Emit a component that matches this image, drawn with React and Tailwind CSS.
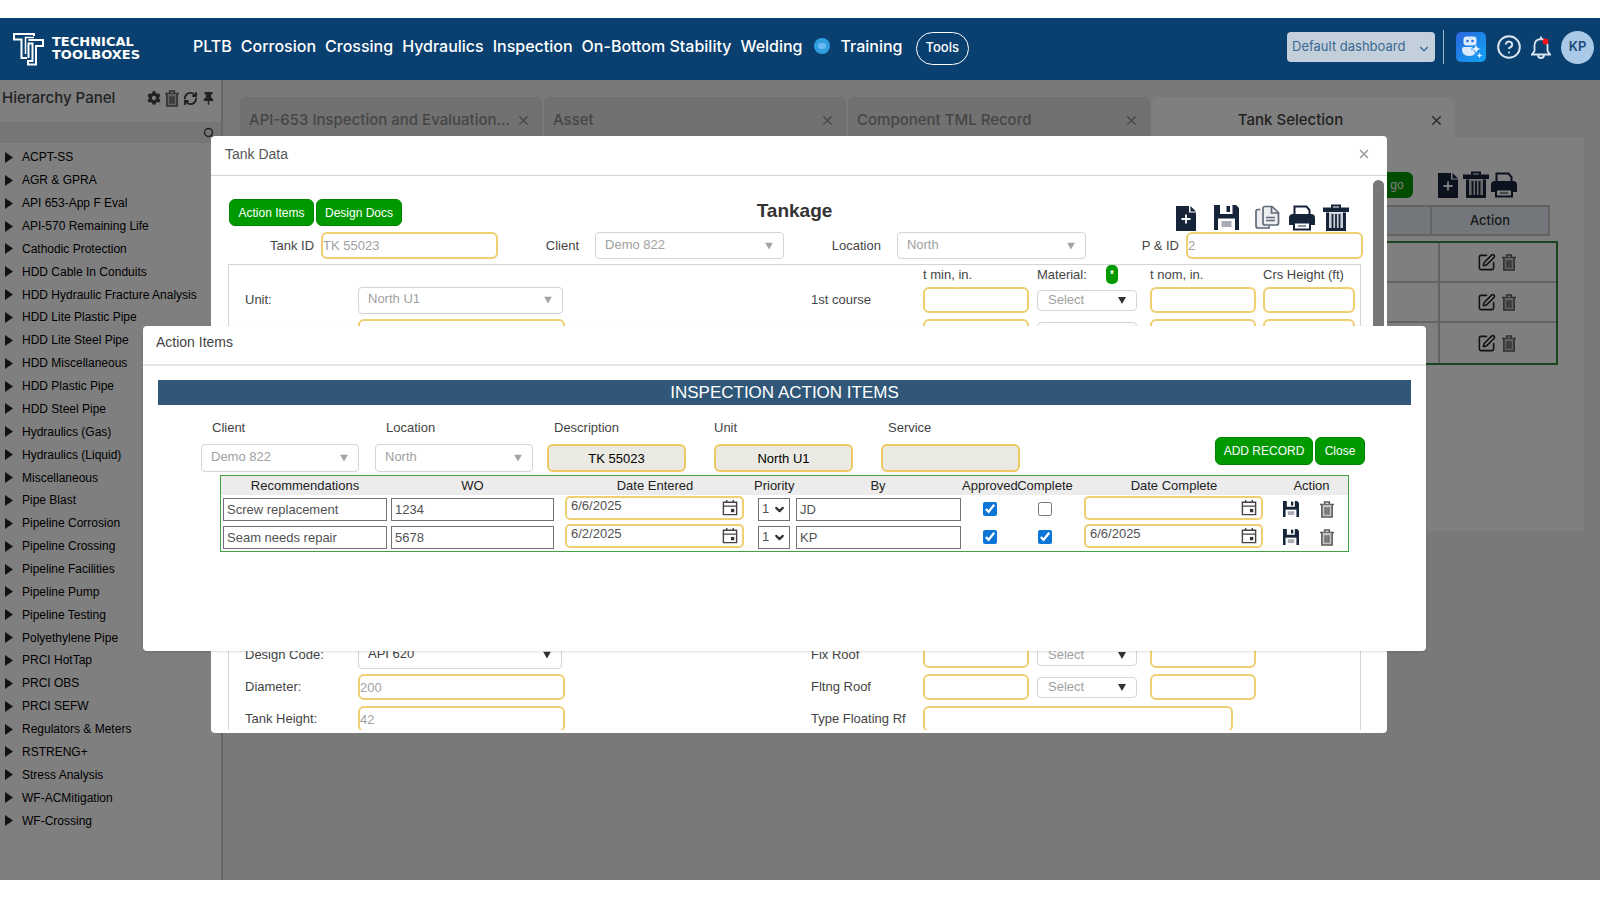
import { useState } from 'react'
import { FaCog, FaThumbtack } from 'react-icons/fa'
import { ChevronDown, CircleHelp, RefreshCw, Search, SquarePen, X } from 'lucide-react'

const NAV = ['PLTB', 'Corrosion', 'Crossing', 'Hydraulics', 'Inspection', 'On-Bottom Stability', 'Welding']

const TREE = [
  'ACPT-SS', 'AGR & GPRA', 'API 653-App F Eval', 'API-570 Remaining Life', 'Cathodic Protection',
  'HDD Cable In Conduits', 'HDD Hydraulic Fracture Analysis', 'HDD Lite Plastic Pipe', 'HDD Lite Steel Pipe',
  'HDD Miscellaneous', 'HDD Plastic Pipe', 'HDD Steel Pipe', 'Hydraulics (Gas)', 'Hydraulics (Liquid)',
  'Miscellaneous', 'Pipe Blast', 'Pipeline Corrosion', 'Pipeline Crossing', 'Pipeline Facilities',
  'Pipeline Pump', 'Pipeline Testing', 'Polyethylene Pipe', 'PRCI HotTap', 'PRCI OBS', 'PRCI SEFW',
  'Regulators & Meters', 'RSTRENG+', 'Stress Analysis', 'WF-ACMitigation', 'WF-Crossing',
]

const TABS = ['API-653 Inspection and Evaluation...', 'Asset', 'Component TML Record']

const RECORDS = [
  { id: 1, text: 'Screw replacement', wo: '1234', entered: '6/6/2025', by: 'JD', approved: true, complete: false, completed: '' },
  { id: 2, text: 'Seam needs repair', wo: '5678', entered: '6/2/2025', by: 'KP', approved: true, complete: true, completed: '6/6/2025' },
]

const yellowField = 'rounded-md border-2 border-[#f0cf70] bg-white text-[13px] text-neutral-400 outline-none'
const greenButton = 'rounded-md border border-[#008500] bg-[#009a00] text-xs text-white'

/* ---------- icons ---------- */

function Logo() {
  return (
    <svg viewBox="0 0 32 34" className="h-[34px] w-8" fill="none" stroke="white" strokeWidth="2">
      <path d="M22 4V2H2v5.500h7.500V26H15" />
      <path d="M22 5.500H13.500V22" strokeWidth="1.500" />
      <path d="M16.500 8H31v6h-7v18.500h-8V29h4.500V11.500H16.500V26" />
    </svg>
  )
}

function FilePlusIcon() {
  return (
    <svg viewBox="0 0 20 26" className="h-[26px] w-5">
      <path d="M0 1h13v6.500h7V26H0zM14.500 1 20 6.500h-5.500z" fill="#16243a" />
      <path d="M10 9.500v9M5.500 14h9" stroke="white" strokeWidth="1.800" />
    </svg>
  )
}

function SaveIcon({ className }) {
  return (
    <svg viewBox="0 0 25 25" className={className}>
      <path d="M0 0h22l3 3v22H0z" fill="#16243a" />
      <path d="M6 0h12.500v9H6z" fill="white" />
      <path d="M12.500 1h3.500v6h-3.500z" fill="#16243a" />
      <path d="M4 13.500h17V25H4z" fill="white" />
      <path d="M7.500 16h10v6h-10z" fill="#a9adb3" />
    </svg>
  )
}

function CopyIcon() {
  return (
    <svg viewBox="0 0 25 25" className="h-[25px] w-[25px]" fill="#eceef0" stroke="#5f6a78" strokeWidth="1.700">
      <path d="M5.500 4.500H3q-2 0-2 2V21q0 2 2 2h11V21" />
      <path d="M8 3.500q0-2 2-2h7l6.500 6v10.500q0 2-2 2H10q-2 0-2-2z" />
      <path d="M16.500 2v6h7M11 12.500h9M11 15.500h9" fill="none" />
    </svg>
  )
}

function PrinterIcon() {
  return (
    <svg viewBox="0 0 26 26" className="h-[26px] w-[26px]">
      <path d="M5.500 9V1.500h12L20.500 5v4" fill="white" stroke="#16243a" strokeWidth="2" />
      <path d="M0 13q0-4 4-4h18q4 0 4 4v7h-4v-3H4v3H0z" fill="#16243a" />
      <path d="M5 17.500h16v7H5z" fill="white" stroke="#16243a" strokeWidth="2" />
      <path d="M9 21h8" stroke="#8a929c" strokeWidth="2" />
    </svg>
  )
}

function BinIcon() {
  return (
    <svg viewBox="0 0 26 27" className="h-[27px] w-[26px]">
      <path d="M0 3.500h8V.5h10v3h8V8H0zM10 3.500h6V2.500h-6z" fill="#16243a" fillRule="evenodd" />
      <path d="M4.500 8.500v17h17v-17" fill="#c9ced4" stroke="#16243a" strokeWidth="3" />
      <path d="M3 25.500h20" stroke="#16243a" strokeWidth="2.500" />
      <path d="M9.500 10v14M13 10v14M16.500 10v14" stroke="#16243a" strokeWidth="1.800" />
    </svg>
  )
}

function TrashIcon({ className }) {
  return (
    <svg viewBox="0 0 15 18" className={className} fill="none" stroke="#5c5c5c" strokeWidth="1.700">
      <path d="M5 3V1h5v2M0 3.700h15" />
      <path d="M2 4v13h11V4" fill="#c4c4c4" />
      <path d="M5.500 6.500v8M7.500 6.500v8M9.500 6.500v8" strokeWidth="1.400" />
    </svg>
  )
}

function CalendarIcon() {
  return (
    <svg viewBox="0 0 16 18" className="h-[17px] w-4" fill="none" stroke="#444" strokeWidth="1.500">
      <path d="M1 3.500h14V16.500H1zM1 7.500h14M4.500 1v3M11.500 1v3" />
      <path d="M9 10.500h3.500V14H9z" fill="#333" stroke="none" />
    </svg>
  )
}

function BotIcon() {
  return (
    <svg viewBox="0 0 30 30" className="h-[30px] w-[30px]">
      <defs>
        <linearGradient id="bot" x1="0" y1="0" x2="1" y2="1">
          <stop offset="0" stopColor="#2c66de" />
          <stop offset="1" stopColor="#0ea5f4" />
        </linearGradient>
      </defs>
      <rect width="30" height="30" rx="5" fill="url(#bot)" />
      <rect x="7.500" y="4.500" width="13" height="9" rx="3" fill="#dcecff" />
      <circle cx="11.500" cy="9" r="1.300" fill="#2c6be0" />
      <circle cx="16.500" cy="9" r="1.300" fill="#2c6be0" />
      <path d="M6 17q0-2 2-2h8l2 3 1 4q-2 2-6 2-7 0-7-7z" fill="#dcecff" />
      <path d="m20 12 1.500 3.500L25 17l-3.500 1.500L20 22l-1.500-3.500L15 17l3.500-1.500zM23.500 20l1 2.500 2.500 1-2.500 1-1 2.500-1-2.500-2.500-1 2.500-1z" fill="#e8f4ff" stroke="#1589ee" strokeWidth=".5" />
    </svg>
  )
}

function BellIcon() {
  return (
    <svg viewBox="0 0 20 23" className="h-[23px] w-5" fill="none" stroke="#dbe6f0" strokeWidth="1.800">
      <path d="M1 18.500h18l-2.500-3.500V9.500q0-6-6.500-6.500-6.500.5-6.500 6.500V15zM10 3V.5M7 19q0 3 3 3t3-3" />
      <circle cx="14.500" cy="5.500" r="2.900" fill="#ff1010" stroke="none" />
    </svg>
  )
}

/* ---------- form parts ---------- */

function SelectBox({ id, value, className, dark }) {
  return (
    <div className={`relative rounded border border-neutral-300 bg-white ${className}`}>
      <select
        id={id}
        defaultValue={value}
        className={`block h-full w-full appearance-none bg-transparent pb-0.5 pl-[9px] text-[13px] leading-4 outline-none ${dark ? 'text-neutral-700' : 'text-neutral-400'}`}
      >
        <option>{value}</option>
      </select>
      <svg viewBox="0 0 8 7" className="pointer-events-none absolute top-1/2 right-2.5 h-[7px] w-2 -translate-y-1/2">
        <path d="M0 0h8L4 7z" fill={dark ? '#333' : '#a3a3a3'} />
      </svg>
    </div>
  )
}

function MaterialSelect({ label }) {
  return (
    <div className="relative h-[21px] w-[100px] rounded border border-neutral-300">
      <select aria-label={label} className="block h-full w-full appearance-none bg-transparent pl-2.5 text-[13px] leading-4 text-neutral-400 outline-none">
        <option>Select</option>
      </select>
      <svg viewBox="0 0 8 7" className="pointer-events-none absolute top-1.5 right-2.5 h-[7px] w-2">
        <path d="M0 0h8L4 7z" fill="#333" />
      </svg>
    </div>
  )
}

function CourseRow({ label, height = true }) {
  const name = label || 'Course'

  return (
    <div className="grid grid-cols-[112px_114px_113px_113px_92px] items-center">
      <span>{label}</span>
      <input aria-label={`${name} t min`} className={`h-[26px] w-[106px] ${yellowField}`} />
      <MaterialSelect label={`${name} material`} />
      <input aria-label={`${name} t nom`} className={`h-[26px] w-[106px] ${yellowField}`} />
      {height && <input aria-label={`${name} height`} className={`h-[26px] w-[92px] ${yellowField}`} />}
    </div>
  )
}

function FormRow({ id, label, control, right }) {
  return (
    <div className="flex h-[26px] items-center justify-between">
      <div className="flex items-center">
        <label htmlFor={id} className="w-[113px]">{label}</label>
        {control}
      </div>
      {right}
    </div>
  )
}

function DateField({ label, value }) {
  return (
    <div className="relative mb-[3px] h-6 w-[179px]">
      <input aria-label={label} defaultValue={value} className="h-full w-full rounded-[5px] border-2 border-[#f0cf70] pb-1 pl-1 text-[13px] text-neutral-600 outline-none" />
      <button aria-label={`Pick ${label}`} className="absolute top-[3px] right-1.5">
        <CalendarIcon />
      </button>
    </div>
  )
}

/* ---------- page ---------- */

function Header() {
  return (
    <header className="flex h-[62px] items-start bg-[#09406f] font-['Inter',sans-serif] text-white">
      <a href="#" className="mt-3.5 ml-3 flex w-[181px] gap-2">
        <Logo />
        <span className="mt-[3px] font-['DejaVu_Sans',sans-serif] text-[13px] leading-[13px] font-bold">
          TECHNICAL<br />TOOLBOXES
        </span>
      </a>
      <nav className="flex h-14 items-center gap-[9px] text-base font-medium whitespace-nowrap">
        {NAV.map((item) => <a key={item} href="#">{item}</a>)}
        <span className="mx-0.5 flex h-4 w-4 items-center justify-center rounded-full bg-[#2f9fe0]">
          <span className="h-1.5 w-2 rounded-full bg-[#6cb9f5]" />
        </span>
        <a href="#">Training</a>
        <button className="mt-1 ml-1 h-[33px] rounded-full border border-white px-[9px] text-[13px]">Tools</button>
      </nav>
      <div className="mt-[11px] mr-1.5 ml-auto flex h-9 items-center">
        <div className="relative">
          <select aria-label="Dashboard" className="h-[30px] w-[148px] appearance-none rounded bg-[#c3d0dc] pl-[5px] text-[13px] text-[#3a6890] outline-none">
            <option>Default dashboard</option>
          </select>
          <ChevronDown size={14} className="pointer-events-none absolute top-2.5 right-1 text-[#3a6890]" />
        </div>
        <span className="mr-3 ml-2 h-[34px] w-px bg-[#9fb6ca]" />
        <button aria-label="Assistant" className="mr-2.5"><BotIcon /></button>
        <button aria-label="Help" className="mr-[9px]"><CircleHelp size={26} strokeWidth={1.8} className="text-[#dbe6f0]" /></button>
        <button aria-label="Notifications" className="mr-2.5"><BellIcon /></button>
        <button className="h-[33px] w-[33px] rounded-full bg-[#a9c9e6] text-[13px] font-semibold text-[#1d4a7c]">KP</button>
      </div>
    </header>
  )
}

function Sidebar() {
  return (
    <aside className="flex w-[223px] shrink-0 flex-col border-r-2 border-[#cfcfcf] bg-white">
      <div className="flex h-9 items-center pr-1.5 pl-0.5 text-[#444]">
        <h2 className="flex-1 font-['Inter',sans-serif] text-[15px] font-medium">Hierarchy Panel</h2>
        <div className="flex items-center gap-1">
          <button aria-label="Settings"><FaCog size={14} /></button>
          <button aria-label="Delete"><TrashIcon className="h-[17px] w-3.5" /></button>
          <button aria-label="Refresh"><RefreshCw size={15} strokeWidth={3} /></button>
          <button aria-label="Pin"><FaThumbtack size={13} /></button>
        </div>
      </div>
      <div className="mt-1.5 flex h-[21px] items-center bg-[#ededed] pr-1.5">
        <input aria-label="Search" className="h-full min-w-0 flex-1 bg-transparent outline-none" />
        <Search size={12} strokeWidth={3} className="text-[#444]" />
      </div>
      <ul className="mt-[3px] mb-12 grid flex-1 auto-rows-fr text-xs text-black">
        {TREE.map((node) => (
          <li key={node} className="flex items-center">
            <button className="flex items-center gap-[9px] pl-[5px]">
              <svg viewBox="0 0 8 11" className="h-[11px] w-2"><path d="M0 0l8 5.500L0 11z" fill="#222" /></svg>
              {node}
            </button>
          </li>
        ))}
      </ul>
    </aside>
  )
}

function Workspace() {
  return (
    <section className="flex min-w-0 flex-1 flex-col bg-[#f2f2f2] pt-[17px] pr-4 pl-[17px]">
      <div className="flex h-10 gap-0.5 font-['Inter',sans-serif] text-[15px] font-medium">
        {TABS.map((tab) => (
          <div key={tab} className="flex w-[302px] items-center justify-between rounded-t-md border border-[#dcdcdc] bg-[#e2e2e2] pt-1.5 pr-2.5 pl-2 text-[#8c8c8c]">
            <button>{tab}</button>
            <button aria-label={`Close ${tab}`}><X size={15} /></button>
          </div>
        ))}
        <div className="flex w-[302px] items-center rounded-t-md bg-white pt-1.5 pr-2.5 text-[#444]">
          <button className="flex-1">Tank Selection</button>
          <button aria-label="Close Tank Selection"><X size={15} /></button>
        </div>
      </div>
      <div className="h-[394px] bg-white pt-[34px]">
        <div className="mr-[67px] flex h-[27px] items-center justify-end">
          <button className="mr-[25px] h-[26px] w-9 rounded-md bg-[#009900] pl-1 text-xs text-white">go</button>
          <button aria-label="New tank" className="mr-[5px]"><FilePlusIcon /></button>
          <button aria-label="Delete tanks" className="mr-0.5"><BinIcon /></button>
          <button aria-label="Print tanks"><PrinterIcon /></button>
        </div>
        <div className="mt-[7px] mr-[34px] flex h-[31px] border-2 border-[#c6c6c6] bg-[#e7eef6]">
          <span className="flex-1" />
          <span className="flex w-[118px] items-center justify-center border-l-2 border-[#c6c6c6] font-['Inter',sans-serif] text-[13px] font-medium text-[#333]">Action</span>
        </div>
        <div className="mt-[5px] mr-[26px] divide-y-2 divide-[#c6c6c6] border-2 border-[#2e8b3d]">
          {[1, 2, 3].map((row) => (
            <div key={row} className="flex h-10">
              <span className="flex-1" />
              <span className="flex w-[118px] items-center justify-center gap-1.5 border-l-2 border-[#c6c6c6] pr-1">
                <button aria-label="Edit"><SquarePen size={19} className="text-[#222]" /></button>
                <button aria-label="Delete"><TrashIcon className="h-[17px] w-3.5" /></button>
              </span>
            </div>
          ))}
        </div>
      </div>
    </section>
  )
}

function TankDialog() {
  return (
    <div role="dialog" aria-label="Tank Data" className="absolute top-14 right-[213px] bottom-[147px] left-[211px] flex flex-col rounded bg-white text-[13px] text-[#444]">
      <div className="flex h-10 shrink-0 items-center justify-between border-b border-neutral-300 pr-4 pb-1 pl-3.5">
        <h2 className="text-sm text-[#555]">Tank Data</h2>
        <button aria-label="Close"><X size={14} className="text-neutral-400" strokeWidth={3} /></button>
      </div>
      <div className="mb-[3px] flex min-h-0 flex-1">
        <div className="min-w-0 flex-1 overflow-hidden pt-[23px] pl-[17px]">
          <div className="grid h-[33px] grid-cols-[1fr_auto_1fr] items-start pr-3.5">
            <div className="flex gap-0.5 pl-px">
              <button className={`h-[27px] w-[85px] ${greenButton}`}>Action Items</button>
              <button className={`h-[27px] w-[86px] ${greenButton}`}>Design Docs</button>
            </div>
            <h1 className="pl-3 text-[19px] leading-6 font-bold text-[#333]">Tankage</h1>
            <div className="mt-[5px] flex justify-end">
              <button aria-label="New" className="mr-[18px]"><FilePlusIcon /></button>
              <button aria-label="Save" className="mr-4"><SaveIcon className="h-[25px] w-[25px]" /></button>
              <button aria-label="Copy" className="mr-[9px]"><CopyIcon /></button>
              <button aria-label="Print" className="mr-2"><PrinterIcon /></button>
              <button aria-label="Delete"><BinIcon /></button>
            </div>
          </div>
          <div className="flex h-[27px] items-center justify-between pl-[42px]">
            <div className="flex items-center gap-[7px]">
              <label htmlFor="tankId">Tank ID</label>
              <input id="tankId" defaultValue="TK 55023" className={`h-[27px] w-[177px] ${yellowField}`} />
            </div>
            <div className="flex items-center gap-4">
              <label htmlFor="client">Client</label>
              <SelectBox id="client" value="Demo 822" className="h-[27px] w-[189px]" />
            </div>
            <div className="flex items-center gap-4 pr-2">
              <label htmlFor="location">Location</label>
              <SelectBox id="location" value="North" className="h-[27px] w-[189px]" />
            </div>
            <div className="flex items-center gap-[7px]">
              <label htmlFor="pid">P &amp; ID</label>
              <input id="pid" defaultValue="2" className={`h-[27px] w-[177px] ${yellowField}`} />
            </div>
          </div>
          <div className="mt-[5px] mr-0.5 flex flex-col gap-1.5 border border-neutral-300 pr-[5px] pb-4 pl-4">
            <div className="-mb-1.5 ml-auto grid h-[22px] grid-cols-[112px_114px_113px_113px_92px] items-start leading-5">
              <span />
              <span>t min, in.</span>
              <span className="flex items-start justify-between pr-8">
                Material:
                <button aria-label="Material info" className="h-[19px] w-3 rounded-[5px] bg-[#009a00] text-[10px] leading-5 font-bold text-white">*</button>
              </span>
              <span>t nom, in.</span>
              <span className="whitespace-nowrap">Crs Height (ft)</span>
            </div>
            <FormRow
              id="unit"
              label="Unit:"
              control={<SelectBox id="unit" value="North U1" className="h-[27px] w-[205px]" />}
              right={<CourseRow label="1st course" />}
            />
            <FormRow
              control={<input aria-label="Service" className={`h-[26px] w-[207px] ${yellowField}`} />}
              right={<CourseRow />}
            />
            <div className="h-[285px]" />
            <FormRow
              id="code"
              label="Design Code:"
              control={<SelectBox id="code" dark value="API 620" className="h-[27px] w-[204px]" />}
              right={<CourseRow label="Fix Roof" height={false} />}
            />
            <FormRow
              id="diameter"
              label="Diameter:"
              control={<input id="diameter" defaultValue="200" className={`h-[26px] w-[207px] ${yellowField}`} />}
              right={<CourseRow label="Fltng Roof" height={false} />}
            />
            <FormRow
              id="height"
              label="Tank Height:"
              control={<input id="height" defaultValue="42" className={`h-[26px] w-[207px] ${yellowField}`} />}
              right={
                <div className="flex w-[544px] items-center">
                  <label htmlFor="roof" className="w-[112px]">Type Floating Rf</label>
                  <input id="roof" className={`h-[26px] w-[310px] ${yellowField}`} />
                </div>
              }
            />
          </div>
        </div>
        <div className="w-6 pt-1 pl-2.5">
          <div className="h-[460px] w-[11px] rounded-full bg-[#777]" />
        </div>
      </div>
    </div>
  )
}

function ReadOnlyField({ id, label, value, indent }) {
  return (
    <div>
      <label htmlFor={id} className={`mb-1.5 block leading-5 ${indent}`}>{label}</label>
      <input id={id} readOnly value={value} className="h-7 w-[139px] rounded-md border-2 border-[#eec862] bg-[#eaeae2] text-center text-[13px] text-black outline-none" />
    </div>
  )
}

function ActionItemsDialog() {
  const [records, setRecords] = useState(RECORDS)

  const toggle = (id, key) =>
    setRecords(records.map((r) => (r.id === id ? { ...r, [key]: !r[key] } : r)))

  const boxed = 'block h-[23px] border border-neutral-500 bg-white pl-[3px] text-[13px] text-neutral-600 outline-none'

  return (
    <div role="dialog" aria-label="Action Items" className="absolute top-[246px] right-[174px] left-[143px] rounded bg-white pb-[99px] text-[13px] text-[#444] shadow-sm">
      <div className="flex h-10 items-center border-b-2 border-neutral-200 pb-1.5 pl-[13px]">
        <h2 className="text-sm text-[#444]">Action Items</h2>
      </div>
      <h3 className="mx-[15px] mt-3.5 bg-[#305777] text-center text-[17px] leading-[25px] text-white">INSPECTION ACTION ITEMS</h3>
      <div className="grid grid-cols-[174px_172px_167px_167px_1fr_auto] pt-[13px] pr-[61px] pl-[58px]">
        <div>
          <label htmlFor="aiClient" className="mb-1.5 block pl-[11px] leading-5">Client</label>
          <SelectBox id="aiClient" value="Demo 822" className="h-7 w-[158px]" />
        </div>
        <div>
          <label htmlFor="aiLocation" className="mb-1.5 block pl-[11px] leading-5">Location</label>
          <SelectBox id="aiLocation" value="North" className="h-7 w-[158px]" />
        </div>
        <ReadOnlyField id="description" label="Description" value="TK 55023" indent="pl-[7px]" />
        <ReadOnlyField id="aiUnit" label="Unit" value="North U1" indent="" />
        <ReadOnlyField id="service" label="Service" value="" indent="pl-[7px]" />
        <div className="mt-[19px] flex h-7 gap-0.5">
          <button className={`w-[98px] ${greenButton}`}>ADD RECORD</button>
          <button className={`w-[50px] ${greenButton}`}>Close</button>
        </div>
      </div>
      <div className="mx-[77px] mt-[3px] border border-[#3fa044]">
        <table className="w-full table-fixed">
          <thead>
            <tr className="h-[19px] bg-[#ececec] leading-[19px] text-[#222]">
              <th className="w-[168px] font-normal">Recommendations</th>
              <th className="w-[167px] font-normal">WO</th>
              <th className="w-[198px] font-normal">Date Entered</th>
              <th className="w-10 font-normal">Priority</th>
              <th className="w-[168px] font-normal">By</th>
              <th className="w-[55px] font-normal">Approved</th>
              <th className="w-14 font-normal">Complete</th>
              <th className="font-normal">Date Complete</th>
              <th className="w-[73px] font-normal">Action</th>
            </tr>
          </thead>
          <tbody>
            {records.map((r) => (
              <tr key={r.id} className="h-7">
                <td className="pl-0.5"><input aria-label="Recommendation" defaultValue={r.text} className={`w-[164px] ${boxed}`} /></td>
                <td className="pl-0.5"><input aria-label="WO" defaultValue={r.wo} className={`w-[163px] ${boxed}`} /></td>
                <td className="pl-[9px]"><DateField label="Date Entered" value={r.entered} /></td>
                <td className="pl-1">
                  <div className="relative w-8">
                    <select aria-label="Priority" className={`w-8 appearance-none ${boxed}`}>
                      <option>1</option>
                    </select>
                    <ChevronDown size={13} strokeWidth={4} className="pointer-events-none absolute top-[5px] right-1 text-[#333]" />
                  </div>
                </td>
                <td className="pl-0.5"><input aria-label="By" defaultValue={r.by} className={`w-[165px] ${boxed}`} /></td>
                <td><input type="checkbox" aria-label="Approved" checked={r.approved} onChange={() => toggle(r.id, 'approved')} className="mx-auto block h-3.5 w-3.5 accent-[#0b76d8]" /></td>
                <td><input type="checkbox" aria-label="Complete" checked={r.complete} onChange={() => toggle(r.id, 'complete')} className="mx-auto block h-3.5 w-3.5 accent-[#0b76d8]" /></td>
                <td className="pl-[11px]"><DateField label="Date Complete" value={r.completed} /></td>
                <td>
                  <div className="flex items-center gap-[21px] pl-2">
                    <button aria-label="Save"><SaveIcon className="h-4 w-4" /></button>
                    <button aria-label="Delete"><TrashIcon className="h-[17px] w-3.5" /></button>
                  </div>
                </td>
              </tr>
            ))}
          </tbody>
        </table>
      </div>
    </div>
  )
}

function App() {
  return (
    <div className="flex min-h-screen flex-col bg-white pt-[18px] pb-5 font-['Liberation_Sans',Arial,sans-serif]">
      <Header />
      <main className="relative flex flex-1">
        <Sidebar />
        <Workspace />
        <div className="absolute inset-0 bg-black/50" />
        <TankDialog />
        <ActionItemsDialog />
      </main>
    </div>
  )
}

export default App
